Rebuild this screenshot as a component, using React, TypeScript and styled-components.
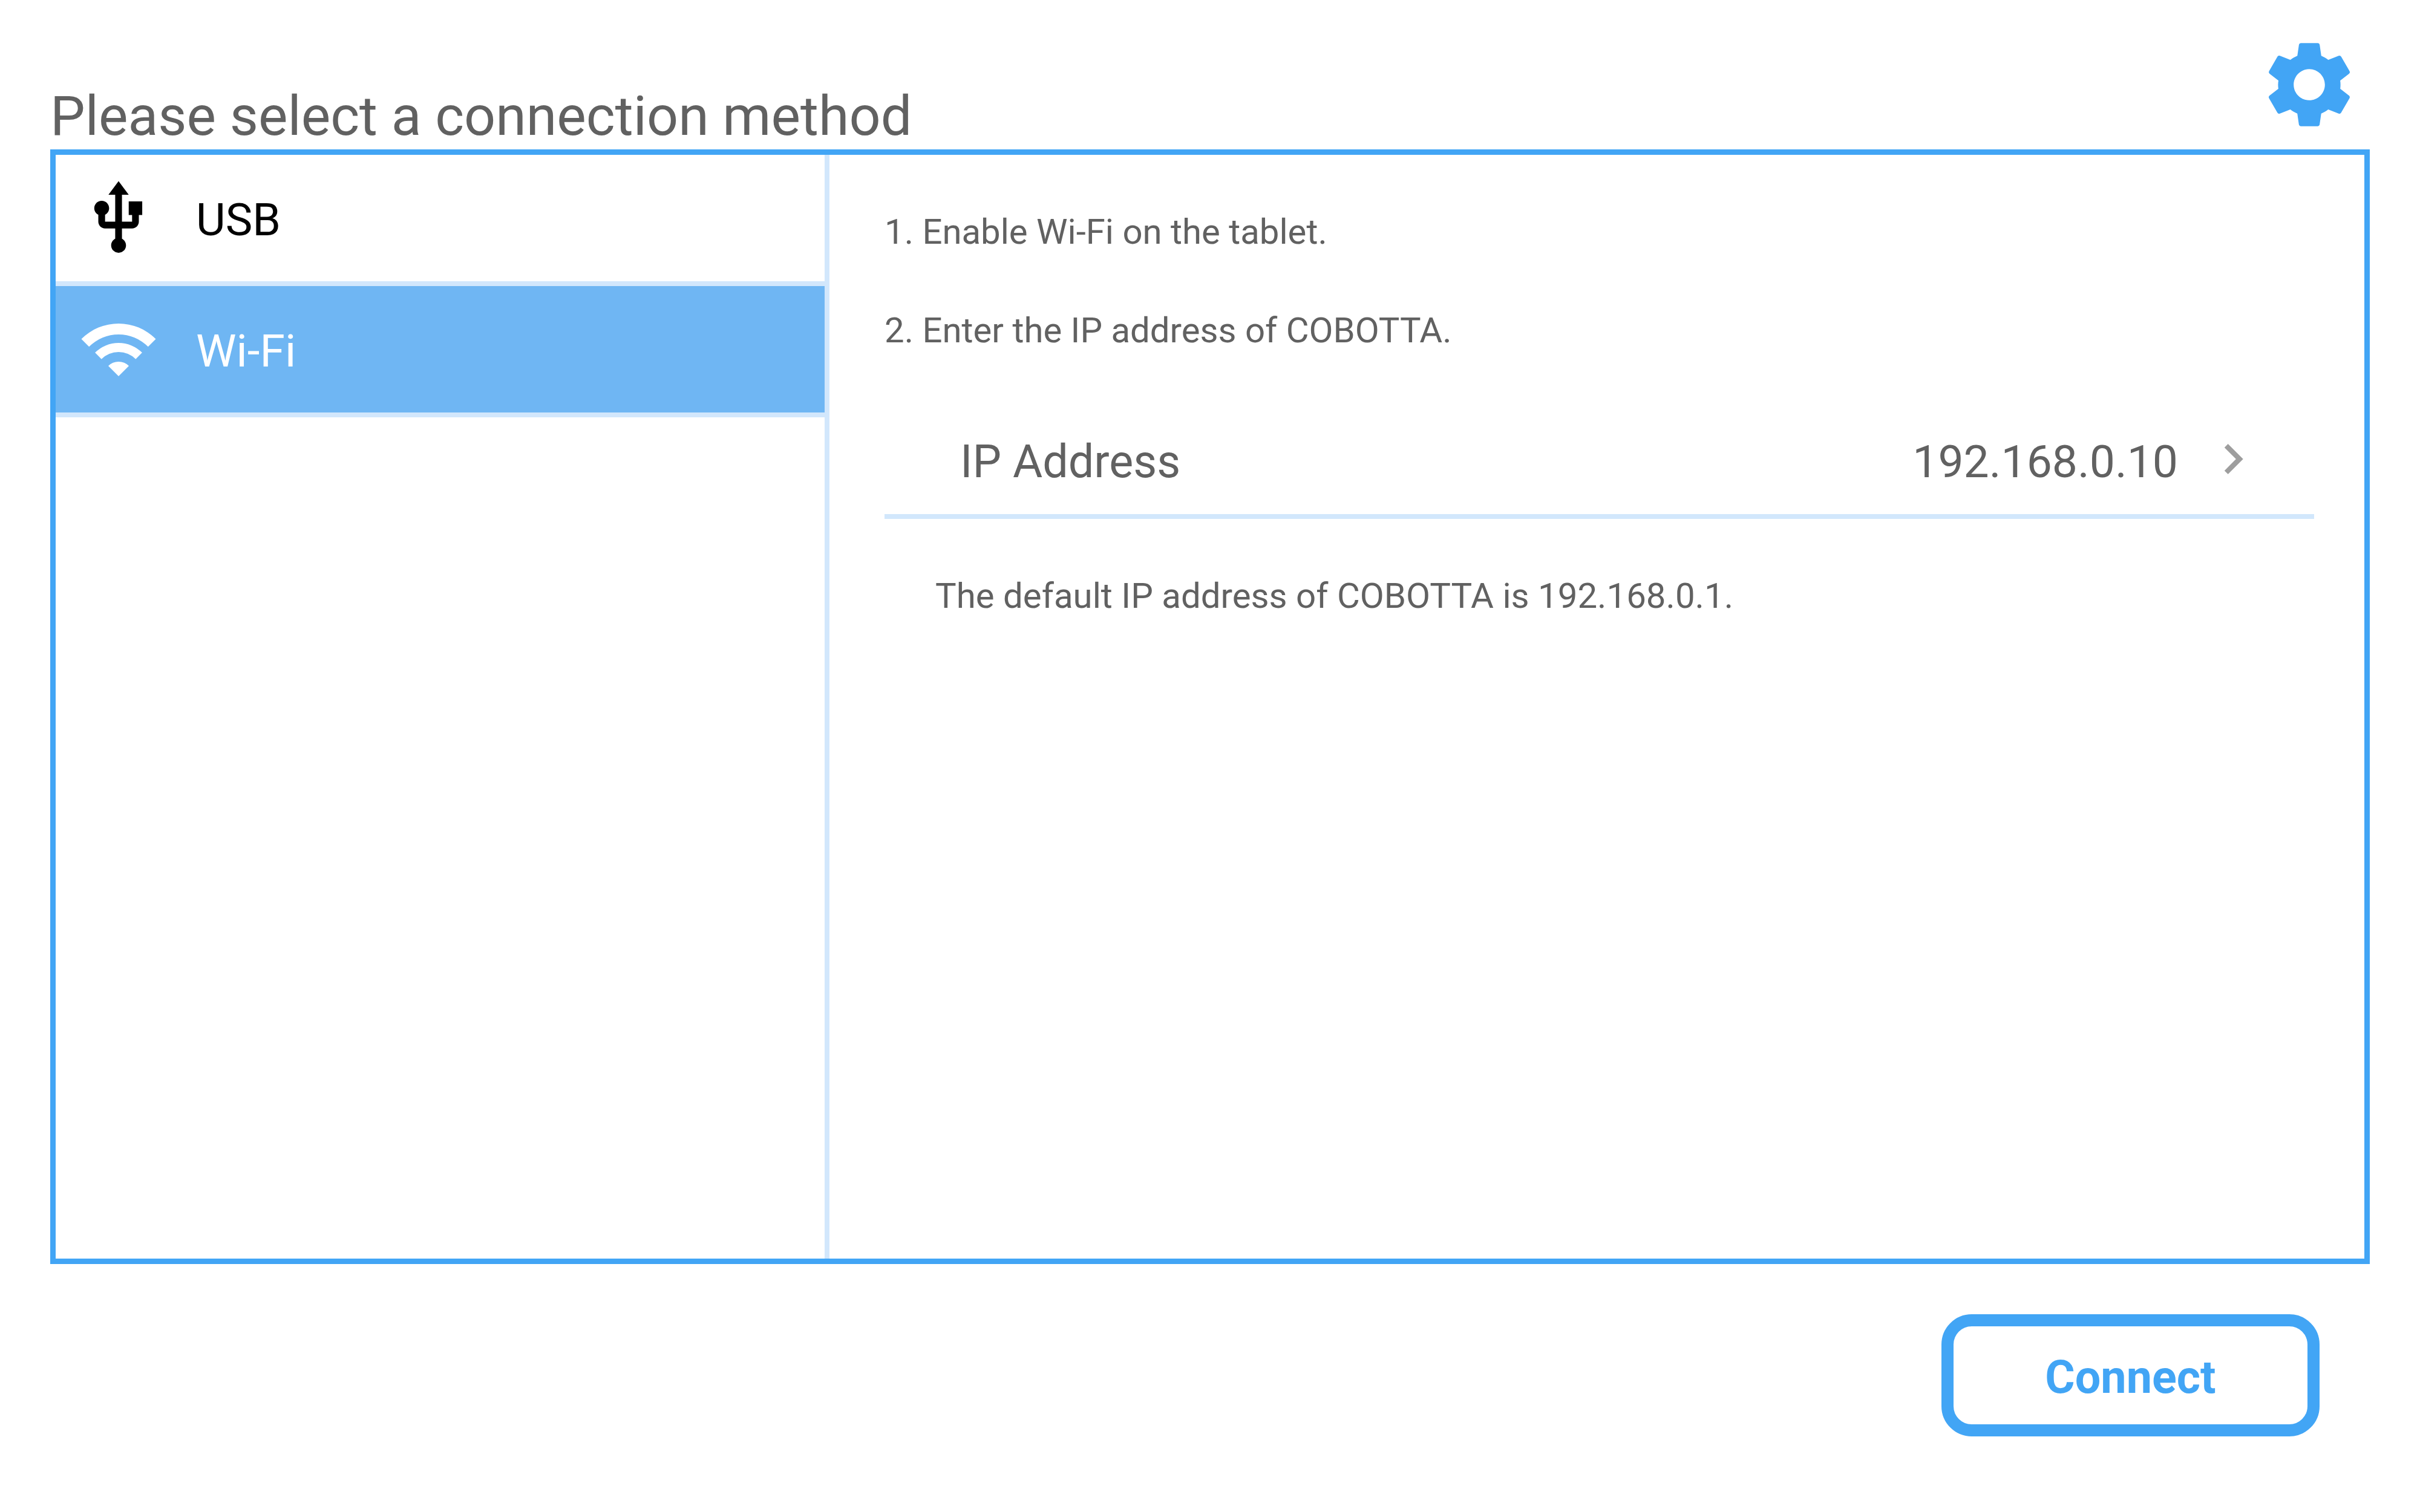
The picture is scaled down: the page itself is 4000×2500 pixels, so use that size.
import styled, { createGlobalStyle } from "styled-components";
import { MdSettings, MdUsb, MdChevronRight } from "react-icons/md";

const GlobalStyle = createGlobalStyle`
  html, body {
    margin: 0;
    padding: 0;
    background: #fff;
  }
  * {
    box-sizing: border-box;
  }
`;

const Page = styled.div`
  width: 4000px;
  height: 2500px;
  padding: 0 83px;
  background: #fff;
  font-family: Roboto, "Liberation Sans", sans-serif;
  color: #616161;
`;

const Header = styled.header`
  height: 247px;
  display: flex;
  align-items: flex-end;
  justify-content: space-between;
  padding: 0 14px 21px 0;
`;

const Title = styled.h1`
  margin: 0 0 -16px;
  font-size: 91.5px;
  line-height: 100px;
  font-weight: 400;
`;

const SettingsIcon = styled(MdSettings)`
  display: block;
  width: 172px;
  height: 172px;
  color: #42a5f5;
`;

const Panel = styled.main`
  height: 1843px;
  display: flex;
  border: 9px solid #42a5f5;
`;

const Sidebar = styled.nav`
  width: 1279px;
  flex: none;
  border-right: 8px solid #d2e7fc;
`;

const MethodRow = styled.div<{ $active?: boolean }>`
  height: 217px;
  display: flex;
  align-items: center;
  gap: 61px;
  padding-left: 37px;
  border-bottom: 8px solid #d2e7fc;
  background: ${(p) => (p.$active ? "#6fb6f3" : "#fff")};
  color: ${(p) => (p.$active ? "#fff" : "#000")};
  font-size: 75px;
`;

const MethodLabel = styled.span`
  padding-top: 5px;
`;

const IconSlot = styled.span`
  width: 134px;
  height: 134px;
  flex: none;
  display: flex;
  align-items: center;
  justify-content: center;
`;

const UsbIcon = styled(MdUsb)`
  display: block;
  width: 134px;
  height: 134px;
`;

const WifiSvg = styled.svg`
  display: block;
  width: 122px;
  height: 88px;
  overflow: visible;
`;

const Content = styled.section`
  flex: 1;
  padding: 77px 83px 0 91px;
`;

const Step = styled.p`
  margin: 0 0 63px;
  font-size: 58.1px;
  line-height: 100px;
`;

const AddressRow = styled.div`
  height: 180px;
  margin-top: 82px;
  display: flex;
  align-items: center;
  padding: 0 84px 0 125px;
  border-bottom: 8px solid #d2e7fc;
  font-size: 75.5px;
`;

const AddressLabel = styled.span`
  flex: 1;
  padding-bottom: 3px;
`;

const AddressValue = styled.span`
  font-size: 75px;
  padding-bottom: 3px;
`;

const Chevron = styled(MdChevronRight)`
  display: block;
  width: 100px;
  height: 100px;
  margin: 0 0 10px 41px;
  color: #9e9e9e;
`;

const Note = styled.p`
  margin: 77px 0 0 84px;
  font-size: 58.2px;
  line-height: 100px;
`;

const Footer = styled.footer`
  display: flex;
  justify-content: flex-end;
  padding: 83px 83px 0 0;
`;

const ConnectButton = styled.button`
  width: 625px;
  height: 202px;
  padding: 5px 0 0;
  border: 20px solid #42a5f5;
  border-radius: 50px;
  background: #fff;
  color: #42a5f5;
  font-family: inherit;
  font-size: 75.5px;
  font-weight: 700;
`;

function WifiIcon() {
  // 90 degree sector, cut in three bands around the apex
  const band = (outer: number, inner: number) => {
    const o = outer * Math.SQRT1_2;
    const i = inner * Math.SQRT1_2;
    return `M${61 - o} ${88 - o}A${outer} ${outer} 0 0 1 ${61 + o} ${88 - o}L${61 + i} ${88 - i}A${inner} ${inner} 0 0 0 ${61 - i} ${88 - i}Z`;
  };
  return (
    <WifiSvg viewBox="0 0 122 88" fill="currentColor">
      <path d={band(87, 69)} />
      <path d={band(55, 40)} />
      <path d="M44 71A24 24 0 0 1 78 71L61 88Z" />
    </WifiSvg>
  );
}

export default function App() {
  return (
    <Page>
      <GlobalStyle />
      <Header>
        <Title>Please select a connection method</Title>
        <SettingsIcon />
      </Header>
      <Panel>
        <Sidebar>
          <MethodRow>
            <IconSlot>
              <UsbIcon />
            </IconSlot>
            <MethodLabel>USB</MethodLabel>
          </MethodRow>
          <MethodRow $active>
            <IconSlot>
              <WifiIcon />
            </IconSlot>
            <MethodLabel>Wi-Fi</MethodLabel>
          </MethodRow>
        </Sidebar>
        <Content>
          <Step>1. Enable Wi-Fi on the tablet.</Step>
          <Step>2. Enter the IP address of COBOTTA.</Step>
          <AddressRow>
            <AddressLabel>IP Address</AddressLabel>
            <AddressValue>192.168.0.10</AddressValue>
            <Chevron />
          </AddressRow>
          <Note>The default IP address of COBOTTA is 192.168.0.1.</Note>
        </Content>
      </Panel>
      <Footer>
        <ConnectButton>Connect</ConnectButton>
      </Footer>
    </Page>
  );
}
